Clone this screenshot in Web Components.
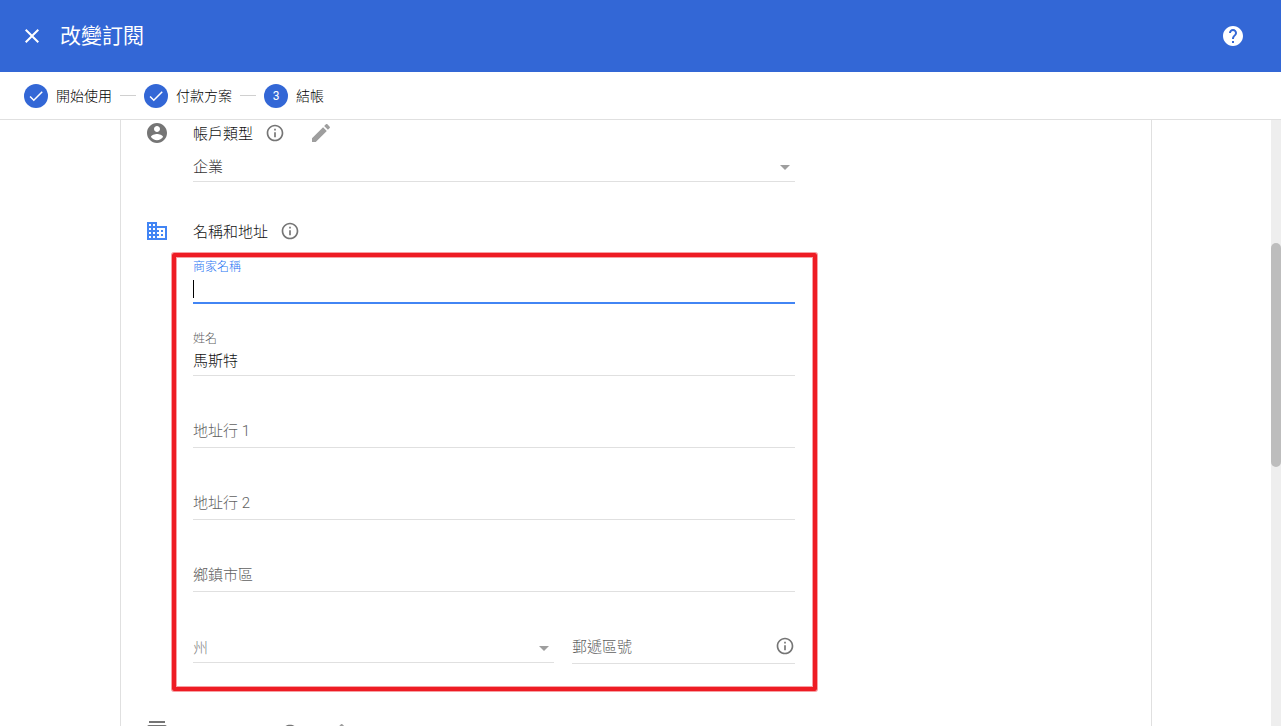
<!DOCTYPE html>
<html lang="zh-Hant">
<head>
<meta charset="utf-8">
<meta name="viewport" content="width=device-width, initial-scale=1">
<title>改變訂閱</title>
<style>
  html, body { height: 100%; margin: 0; }
  body {
    background: #fff;
    color: #111;
    font: 300 15px/24px Roboto, "Noto Sans CJK TC", sans-serif;
    overflow: hidden;
  }
</style>
</head>
<body>
<subscription-page></subscription-page>

<script>
const ICONS = {
  close: '<path d="M19 6.41 17.59 5 12 10.59 6.41 5 5 6.41 10.59 12 5 17.59 6.41 19 12 13.41 17.59 19 19 17.59 13.41 12z"/>',
  help: '<path d="M12 2C6.48 2 2 6.48 2 12s4.48 10 10 10 10-4.48 10-10S17.52 2 12 2zm1 17h-2v-2h2v2zm2.07-7.75-.9.92C13.45 12.9 13 13.5 13 15h-2v-.5c0-1.1.45-2.1 1.17-2.83l1.24-1.26c.37-.36.59-.86.59-1.41 0-1.1-.9-2-2-2s-2 .9-2 2H8c0-2.21 1.79-4 4-4s4 1.79 4 4c0 .88-.36 1.68-.93 2.25z"/>',
  check: '<path d="M9 16.17 4.83 12l-1.42 1.41L9 19 21 7l-1.41-1.41z"/>',
  account: '<path d="M12 2C6.48 2 2 6.48 2 12s4.48 10 10 10 10-4.48 10-10S17.52 2 12 2zm0 3c1.66 0 3 1.34 3 3s-1.34 3-3 3-3-1.34-3-3 1.34-3 3-3zm0 14.2c-2.5 0-4.71-1.28-6-3.22.03-1.99 4-3.08 6-3.08 1.99 0 5.97 1.09 6 3.08-1.29 1.94-3.5 3.22-6 3.22z"/>',
  business: '<path d="M12 7V3H2v18h20V7H12zM6 19H4v-2h2v2zm0-4H4v-2h2v2zm0-4H4V9h2v2zm0-4H4V5h2v2zm4 12H8v-2h2v2zm0-4H8v-2h2v2zm0-4H8V9h2v2zm0-4H8V5h2v2zm10 12h-8v-2h2v-2h-2v-2h2v-2h-2V9h8v10zm-2-8h-2v2h2v-2zm0 4h-2v2h2v-2z"/>',
  contacts: '<path d="M20 0H4v2h16V0zM4 24h16v-2H4v2zM20 4H4c-1.1 0-2 .9-2 2v12c0 1.1.9 2 2 2h16c1.1 0 2-.9 2-2V6c0-1.1-.9-2-2-2zm-8 2.75c1.24 0 2.25 1.01 2.25 2.25s-1.01 2.25-2.25 2.25S9.75 10.24 9.75 9 10.76 6.75 12 6.75zM17 17H7v-1.5c0-1.67 3.33-2.5 5-2.5s5 .83 5 2.5V17z"/>',
  info: '<path d="M11 17h2v-6h-2v6zm1-15C6.48 2 2 6.48 2 12s4.48 10 10 10 10-4.48 10-10S17.52 2 12 2zm0 18c-4.41 0-8-3.59-8-8s3.59-8 8-8 8 3.59 8 8-3.59 8-8 8zM11 9h2V7h-2v2z"/>',
  edit: '<path d="M3 17.25V21h3.75L17.81 9.94l-3.75-3.75L3 17.25zM20.71 7.04c.39-.39.39-1.02 0-1.41l-2.34-2.34c-.39-.39-1.02-.39-1.41 0l-1.83 1.83 3.75 3.75 1.83-1.83z"/>'
};

function define(name, render) {
  customElements.define(name, class extends HTMLElement {
    connectedCallback() {
      if (this.shadowRoot) return;
      this.attachShadow({ mode: 'open' }).innerHTML = render(this);
    }
  });
}

define('md-icon', el => `
  <style>
    :host { display: block; flex: none; width: 24px; height: 24px; }
    :host([size="small"]) { width: 20px; height: 20px; }
    svg { display: block; width: 100%; height: 100%; fill: currentColor; }
  </style>
  <svg viewBox="0 0 24 24" aria-hidden="true">${ICONS[el.getAttribute('name')]}</svg>`);

define('icon-button', el => `
  <style>
    :host { display: block; flex: none; }
    button { display: block; margin: 0; padding: 0; border: 0; background: none; color: inherit; cursor: pointer; }
  </style>
  <button type="button" aria-label="${el.getAttribute('label')}">
    <md-icon name="${el.getAttribute('icon')}" size="${el.getAttribute('size') || ''}"></md-icon>
  </button>`);

define('app-header', () => `
  <style>
    :host { display: flex; align-items: center; flex: none; gap: 16px; height: 72px; box-sizing: border-box;
            padding: 0 36px 0 20px; background: #3367d6; color: #fff; }
    h1 { flex: 1; margin: 0; font-size: 21px; line-height: 32px; font-weight: 400; }
  </style>
  <icon-button icon="close" label="關閉"></icon-button>
  <h1><slot></slot></h1>
  <icon-button icon="help" label="說明"></icon-button>`);

define('step-item', el => `
  <style>
    :host { display: flex; align-items: center; gap: 8px; font-size: 14px; color: #000; }
    :host(:not(:first-child))::before { content: ""; width: 16px; height: 1px; background: #d0d0d0; }
    .mark { display: grid; place-items: center; width: 24px; height: 24px; border-radius: 50%;
            background: #3367d6; color: #fff; font-size: 12px; font-weight: 400; }
    md-icon { width: 18px; height: 18px; }
  </style>
  <span class="mark">${el.hasAttribute('done') ? '<md-icon name="check"></md-icon>' : el.getAttribute('number')}</span>
  <span><slot></slot></span>`);

define('step-bar', () => `
  <style>
    :host { display: flex; align-items: center; flex: none; gap: 8px; height: 48px; box-sizing: border-box;
            padding: 0 24px; border-bottom: 1px solid #e0e0e0; }
  </style>
  <slot></slot>`);

define('form-section', el => `
  <style>
    :host { display: grid; grid-template-columns: 24px minmax(0, 602px); column-gap: 24px; }
    .lead { color: #757575; }
    :host([active]) .lead { color: #4285f4; }
    header { display: flex; align-items: center; height: 24px; }
    h2 { min-width: 60px; margin: 0 12px 0 0; padding-top: 2px; font-size: 15px; line-height: 24px; font-weight: inherit; }
    h2:empty { min-width: 75px; }
    .info { color: #757575; margin-right: 24px; }
    .edit { color: #9e9e9e; }
  </style>
  <md-icon class="lead" name="${el.getAttribute('icon')}"></md-icon>
  <div>
    <header>
      <h2>${el.getAttribute('heading') || ''}</h2>
      <icon-button class="info" icon="info" size="small" label="更多資訊"></icon-button>
      ${el.hasAttribute('editable') ? '<icon-button class="edit" icon="edit" label="編輯"></icon-button>' : ''}
    </header>
    <slot></slot>
  </div>`);

define('text-field', el => {
  const value = el.getAttribute('value') || '';
  return `
  <style>
    :host { display: block; position: relative; height: 46px; box-sizing: border-box; border-bottom: 1px solid #e0e0e0; }
    .box { display: grid; grid-template-rows: 18px 25px; }
    label { grid-area: 1 / 1; color: #616161; font-size: 12px; line-height: 18px; pointer-events: none; z-index: 1; }
    input { grid-area: 2 / 1; width: 100%; box-sizing: border-box; margin: 0; padding: 0; border: 0; outline: 0;
            background: none; color: inherit; font: inherit; line-height: 24px; }
    :host([empty]) label { grid-area: 2 / 1; font-size: 15px; line-height: 22px; }
    :host([active]) { border-bottom-color: #4285f4; box-shadow: inset 0 -1px #4285f4; }
    :host([active]) label { color: #2a75f3; }
    .caret { grid-area: 2 / 1; align-self: center; width: 1px; height: 18px; background: #000; }
    .info { position: absolute; right: 0; bottom: 7px; color: #757575; }
  </style>
  <div class="box">
    <label for="f">${el.getAttribute('label')}</label>
    <input id="f" type="text" value="${value}">
    ${el.hasAttribute('active') ? '<span class="caret"></span>' : ''}
  </div>
  ${el.hasAttribute('info') ? '<icon-button class="info" icon="info" size="small" label="更多資訊"></icon-button>' : ''}`;
});

define('select-field', el => `
  <style>
    :host { display: block; position: relative; color: #333; }
    :host([empty]) { color: #858585; }
    select { display: block; width: 100%; height: 29px; box-sizing: border-box; margin: 0; padding: 0 24px 0 0; border: 0;
             border-bottom: 1px solid #e0e0e0; border-radius: 0; appearance: none; outline: 0; background: none;
             color: inherit; font: inherit; }
    svg { position: absolute; right: 5px; top: 12px; width: 10px; height: 5px; fill: #9e9e9e; pointer-events: none; }
  </style>
  <select aria-label="${el.getAttribute('label')}"><option>${el.getAttribute('value')}</option></select>
  <svg viewBox="0 0 10 5" aria-hidden="true"><path d="M0 0h10L5 5z"/></svg>`);

define('address-form', () => `
  <style>
    :host { display: grid; gap: 26px; position: relative; margin-top: 15px; }
    .row { display: grid; grid-template-columns: 361fr 223fr; gap: 18px; }
    select-field { margin-top: 16px; }
    .highlight { position: absolute; inset: -5px -22px -27px -21px; border: 4px solid #ee1c24; border-radius: 2px;
                 box-shadow: 0 0 0 1px #f7a0a4, inset 0 0 0 1px #f7a0a4; pointer-events: none; }
  </style>
  <text-field label="商家名稱" active></text-field>
  <text-field label="姓名" value="馬斯特"></text-field>
  <text-field label="地址行 1" empty></text-field>
  <text-field label="地址行 2" empty></text-field>
  <text-field label="鄉鎮市區" empty></text-field>
  <div class="row">
    <select-field label="州" value="州" empty></select-field>
    <text-field label="郵遞區號" empty info></text-field>
  </div>
  <div class="highlight"></div>`);

define('scroll-rail', () => `
  <style>
    :host { display: grid; grid-template-rows: 123fr 224fr 259fr; width: 10px; background: #eee; }
    div { grid-row: 2; border-radius: 5px; background: #bdbdbd; }
  </style>
  <div></div>`);

define('subscription-page', () => `
  <style>
    :host { display: flex; flex-direction: column; height: 100vh; }
    .view { flex: 1; min-height: 0; display: grid; grid-template-columns: minmax(0, 1fr) 10px; grid-template-rows: 100%; }
    .scroller { overflow: hidden; padding: 0 119px 0 120px; }
    main { border: solid #e0e0e0; border-width: 0 1px; padding: 1px 24px 0; }
    select-field { margin-top: 8px; }
    .account { margin-bottom: 37px; }
    .address { margin-bottom: 57px; }
  </style>
  <app-header>改變訂閱</app-header>
  <step-bar>
    <step-item done>開始使用</step-item>
    <step-item done>付款方案</step-item>
    <step-item number="3">結帳</step-item>
  </step-bar>
  <div class="view">
    <div class="scroller">
      <main>
        <form-section class="account" icon="account" heading="帳戶類型" editable>
          <select-field label="帳戶類型" value="企業"></select-field>
        </form-section>
        <form-section class="address" icon="business" heading="名稱和地址" active>
          <address-form></address-form>
        </form-section>
        <form-section icon="contacts" editable></form-section>
      </main>
    </div>
    <scroll-rail></scroll-rail>
  </div>`);
</script>
</body>
</html>
